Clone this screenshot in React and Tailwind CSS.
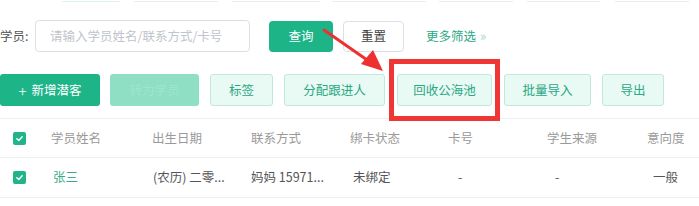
import React from "react";

const Check = () => (
  <span className="w-[13px] h-[13px] rounded-[2px] bg-[#1fb489] flex items-center justify-center">
    <svg width="9" height="9" viewBox="0 0 10 10" fill="none">
      <path d="M2 5.2 L4.2 7.2 L8 3" stroke="white" strokeWidth="1.6" strokeLinecap="round" strokeLinejoin="round" />
    </svg>
  </span>
);

const LightBtn = ({ children, className }) => (
  <div
    className={
      "h-[32px] rounded-[3px] border border-[#bfe9da] bg-[#e9f9f3] text-[#2aa884] flex items-center justify-center shrink-0 " +
      className
    }
  >
    {children}
  </div>
);

export default function App() {
  return (
    <div
      className="relative w-[699px] h-[206px] overflow-hidden bg-white text-[12.5px]"
      style={{ fontFamily: '"Noto Sans CJK SC", "Noto Sans", sans-serif' }}
    >
      {/* faint top strip */}
      <div className="flex h-[2px]">
        <div className="ml-[62px] w-[58px] border-b border-[#dff3ec]" />
        <div className="ml-[14px] w-[84px] border-b border-[#ececec]" />
        <div className="ml-[14px] w-[88px] border-b border-[#ececec]" />
        <div className="ml-[12px] w-[94px] border-b border-[#ececec]" />
        <div className="ml-[13px] w-[74px] border-b border-[#ececec]" />
        <div className="ml-[14px] w-[73px] border-b border-[#ececec]" />
        <div className="ml-[15px] w-[74px] border-b border-[#ececec]" />
      </div>

      {/* search row */}
      <div className="mt-[18px] flex items-center h-[32px]">
        <div className="w-[35px] text-[#555]">学员:</div>
        <div className="w-[215px] h-[32px] rounded-[4px] border border-[#dcdfe6] flex items-center pl-[14px] text-[#c0c4cc]">
          请输入学员姓名/联系方式/卡号
        </div>
        <div className="ml-[19px] w-[64px] h-[31px] rounded-[4px] bg-[#1db488] text-white flex items-center justify-center">
          查询
        </div>
        <div className="ml-[10px] w-[61px] h-[31px] rounded-[4px] border border-[#dcdfe6] text-[#444] flex items-center justify-center">
          重置
        </div>
        <div className="ml-[22px] text-[#2aa884] flex items-center gap-[4px]">
          <span>更多筛选</span>
          <span className="text-[#9fd9c5] text-[13px]">»</span>
        </div>
      </div>

      {/* action row */}
      <div className="mt-[22px] flex items-center h-[32px]">
        <div className="w-[100px] h-[32px] rounded-[3px] bg-[#1db488] text-white flex items-center justify-center gap-[5px] shrink-0">
          <span className="text-[15px] leading-none font-light">+</span>
          <span>新增潜客</span>
        </div>
        <div className="ml-[10px] w-[89px] h-[32px] rounded-[3px] bg-[#8fdfc4] text-[#9fe5cd] flex items-center justify-center shrink-0">
          转为学员
        </div>
        <LightBtn className="ml-[11px] w-[63px]">标签</LightBtn>
        <LightBtn className="ml-[11px] w-[101px]">分配跟进人</LightBtn>
        <LightBtn className="ml-[12px] w-[95px]">回收公海池</LightBtn>
        <LightBtn className="ml-[12px] w-[87px]">批量导入</LightBtn>
        <LightBtn className="ml-[11px] w-[62px]">导出</LightBtn>
      </div>

      {/* table */}
      <div className="mt-[12px] border-t border-[#ebeef5]">
        <div className="grid grid-cols-[51px_101px_99px_99px_98px_99px_100px_1fr] items-center h-[39px] border-b border-[#ebeef5] text-[#9a9a9a]">
          <div className="pl-[13px] flex"><Check /></div>
          <div>学员姓名</div>
          <div>出生日期</div>
          <div>联系方式</div>
          <div>绑卡状态</div>
          <div>卡号</div>
          <div>学生来源</div>
          <div>意向度</div>
        </div>
        <div className="grid grid-cols-[51px_101px_99px_99px_98px_99px_100px_1fr] items-center h-[40px] border-b border-[#ebeef5] text-[#555]">
          <div className="pl-[13px] flex"><Check /></div>
          <div className="pl-[2px] text-[#3aa98a]">张三</div>
          <div className="pl-[1px]">(农历) 二零...</div>
          <div>妈妈 15971...</div>
          <div className="pl-[3px]">未绑定</div>
          <div className="pl-[10px]">-</div>
          <div className="pl-[8px]">-</div>
          <div className="pl-[6px]">一般</div>
        </div>
      </div>

      {/* annotation: red box */}
      <div className="absolute left-[389px] top-[59px] w-[111px] h-[62px] border-[5px] border-[#f03535]" />

      {/* annotation: arrow */}
      <svg className="absolute left-0 top-0" width="699" height="206" viewBox="0 0 699 206">
        <line x1="324" y1="30" x2="370" y2="62" stroke="#ee3030" strokeWidth="3" strokeLinecap="round" />
        <polygon points="383,71 361,64 373,50" fill="#ee3030" />
      </svg>
    </div>
  );
}
